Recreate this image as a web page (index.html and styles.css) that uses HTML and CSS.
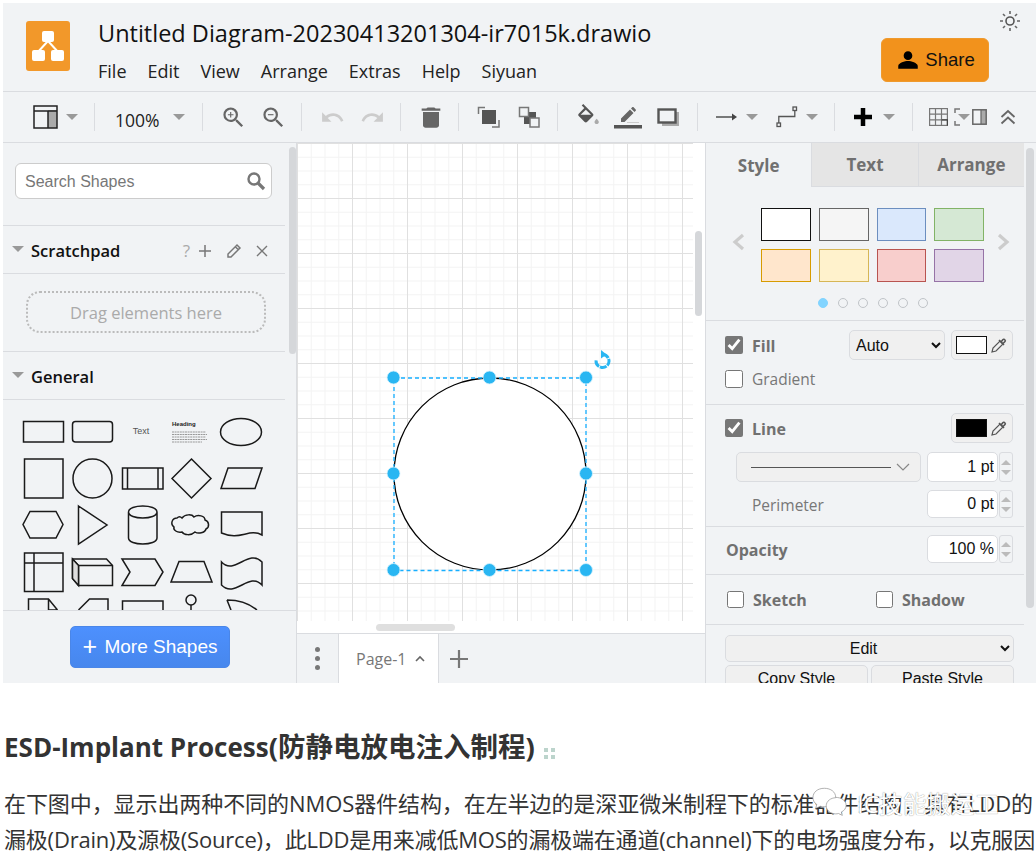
FILE: index.html
```html
<!DOCTYPE html>
<html lang="en">
<head>
  <meta charset="UTF-8" />
  <meta name="viewport" content="width=device-width, initial-scale=1.0"/>
  <title>Untitled Diagram</title>
  <link rel="stylesheet" href="styles.css">
</head>
<body>
  <div class="app">
    <header class="header">
      <svg class="logo" viewBox="0 0 44 50">
        <rect width="44" height="50" rx="3" fill="#f2982a"/>
        <path d="M22 20 L11 32 M22 20 L33 32" stroke="#fff" stroke-width="2"/>
        <rect x="16" y="10" width="12" height="11" rx="2" fill="#fff"/>
        <rect x="6" y="29" width="13" height="11" rx="2" fill="#fff"/>
        <rect x="25" y="29" width="13" height="11" rx="2" fill="#fff"/>
      </svg>
      <div class="titles">
        <div class="doc-title">Untitled Diagram-20230413201304-ir7015k.drawio</div>
        <nav class="menu">
          <span>File</span><span>Edit</span><span>View</span><span>Arrange</span><span>Extras</span><span>Help</span><span>Siyuan</span>
        </nav>
      </div>
      <button class="share">
        <svg width="26" height="26" viewBox="0 0 24 24"><path d="M12 12c2.21 0 4-1.79 4-4s-1.79-4-4-4-4 1.79-4 4 1.79 4 4 4zm0 1c-2.67 0-9 1.84-9 4.5V20h18v-2.5c0-2.66-6.33-4.5-9-4.5z"/></svg>
        Share
      </button>
      <svg class="sun" viewBox="0 0 22 22">
        <circle cx="11" cy="11" r="4" fill="none" stroke="#555" stroke-width="1.6"/>
        <path d="M11 1v3M11 18v3M1 11h3M18 11h3M4 4l2 2M16 16l2 2M4 18l2-2M16 6l2-2" stroke="#666" stroke-width="1.6"/>
      </svg>
    </header>

    <div class="toolbar">
      <div class="tb-group tb-first">
        <svg width="25" height="24" viewBox="0 0 25 24">
          <rect x="15" y="5" width="9" height="18" fill="#aaa"/>
          <rect x="1" y="1" width="23" height="22" fill="none" stroke="#222" stroke-width="1.5"/>
          <path d="M1 6h23M15 6v17" stroke="#222" stroke-width="1.5"/>
        </svg>
        <i class="caret"></i>
      </div>
      <div class="tb-group tb-zoom">
        <span class="zoom-value">100%</span>
        <i class="caret"></i>
      </div>
      <div class="tb-group">
        <span class="tb-btn"><svg width="27" height="27" viewBox="0 0 24 24" fill="#666"><path d="M15.5 14h-.79l-.28-.27A6.471 6.471 0 0 0 16 9.5 6.5 6.5 0 1 0 9.5 16c1.61 0 3.09-.59 4.23-1.57l.27.28v.79l5 4.99L20.49 19l-4.99-5zm-6 0C7.01 14 5 11.99 5 9.5S7.01 5 9.5 5 14 7.01 14 9.5 11.99 14 9.5 14z"/><path d="M12 10h-2v2H9v-2H7V9h2V7h1v2h2v1z"/></svg></span>
        <span class="tb-btn"><svg width="27" height="27" viewBox="0 0 24 24" fill="#666"><path d="M15.5 14h-.79l-.28-.27A6.471 6.471 0 0 0 16 9.5 6.5 6.5 0 1 0 9.5 16c1.61 0 3.09-.59 4.23-1.57l.27.28v.79l5 4.99L20.49 19l-4.99-5zm-6 0C7.01 14 5 11.99 5 9.5S7.01 5 9.5 5 14 7.01 14 9.5 11.99 14 9.5 14z"/><path d="M7 9h5v1H7z"/></svg></span>
      </div>
      <div class="tb-group">
        <span class="tb-btn"><svg width="25" height="25" viewBox="0 0 24 24" fill="#ccc"><path d="M12.5 8c-2.65 0-5.05.99-6.9 2.6L2 7v9h9l-3.62-3.62c1.39-1.16 3.16-1.88 5.12-1.88 3.54 0 6.55 2.31 7.6 5.5l2.37-.78C21.08 11.03 17.15 8 12.5 8z"/></svg></span>
        <span class="tb-btn"><svg width="25" height="25" viewBox="0 0 24 24" fill="#ccc"><path d="M18.4 10.6C16.55 8.99 14.15 8 11.5 8c-4.65 0-8.58 3.03-9.96 7.22L3.9 16c1.05-3.19 4.05-5.5 7.6-5.5 1.95 0 3.73.72 5.12 1.88L13 16h9V7l-3.6 3.6z"/></svg></span>
      </div>
      <div class="tb-group tb-del">
        <span class="tb-btn"><svg width="32" height="27" viewBox="0 0 24 24" preserveAspectRatio="none" fill="#666"><path d="M6 19c0 1.1.9 2 2 2h8c1.1 0 2-.9 2-2V7H6v12zM19 4h-3.5l-1-1h-5l-1 1H5v2h14V4z"/></svg></span>
      </div>
      <div class="tb-group">
        <span class="tb-btn"><svg width="24" height="24" viewBox="0 0 24 24">
          <path d="M1.5 9V2.500H8M15 22H22V15" fill="none" stroke="#777" stroke-width="1.5"/>
          <rect x="5" y="5" width="14" height="14" fill="#555"/>
        </svg></span>
        <span class="tb-btn"><svg width="24" height="24" viewBox="0 0 24 24">
          <rect x="7" y="7" width="12" height="12" fill="#555"/>
          <rect x="2.5" y="2.5" width="9" height="9" fill="#f1f3f5" stroke="#777" stroke-width="1.5"/>
          <rect x="13" y="13" width="9" height="9" fill="#f1f3f5" stroke="#777" stroke-width="1.5"/>
        </svg></span>
      </div>
      <div class="tb-group tb-format">
        <span class="tb-btn"><svg width="26" height="26" viewBox="0 0 24 24"><path fill="#555" d="M16.56 8.94L7.62 0 6.21 1.41l2.38 2.38-5.15 5.15c-.59.59-.59 1.54 0 2.12l5.5 5.5c.29.29.68.44 1.06.44s.77-.15 1.06-.44l5.5-5.5c.59-.58.59-1.53 0-2.12zM5.21 10L10 5.21 14.79 10H5.21z"/><path fill="#aaa" d="M20 13.5s-2 1.8-2 3c0 1.1.9 2 2 2s2-.9 2-2c0-1.2-2-3-2-3z"/></svg></span>
        <span class="tb-btn"><svg width="28" height="26" viewBox="0 0 28 26">
          <path fill="#666" d="M7 14.5V18h3.5L19.5 9l-3.5-3.5zM21.7 6.8c.4-.4.4-1 0-1.4l-2.1-2.1c-.4-.4-1-.4-1.4 0L17 4.5 20.5 8z"/>
          <path d="M13 18.5h12" stroke="#ccc"/>
          <rect x="0" y="21" width="28" height="3.5" fill="#555"/>
        </svg></span>
        <span class="tb-btn"><svg width="24" height="24" viewBox="0 0 24 24">
          <rect x="6" y="7" width="17" height="14" fill="#aaa"/>
          <rect x="2.5" y="4.5" width="17" height="13" fill="#f1f3f5" stroke="#555" stroke-width="2.4"/>
        </svg></span>
      </div>
      <div class="tb-group tb-lines">
        <span class="tb-combo"><svg width="22" height="12" viewBox="0 0 22 12"><path d="M0 6h19" stroke="#444" stroke-width="1.4"/><path d="M16 2.5L21 6l-5 3.5z" fill="#444"/></svg><i class="caret"></i></span>
        <span class="tb-combo"><svg width="22" height="22" viewBox="0 0 22 22" fill="none" stroke="#555" stroke-width="1.3"><rect x="1" y="17" width="3.5" height="3.5"/><rect x="17" y="1" width="3.5" height="3.5"/><path d="M2.8 17v-6.5h16V4.5"/></svg><i class="caret"></i></span>
      </div>
      <div class="tb-group tb-insert">
        <svg width="20" height="20" viewBox="0 0 20 20"><path d="M10 1v18M1 10h18" stroke="#000" stroke-width="4.5"/></svg>
        <i class="caret"></i>
      </div>
      <div class="tb-group tb-last">
        <svg width="19" height="18" viewBox="0 0 19 18" fill="none" stroke="#777" stroke-width="1.2"><rect x=".6" y=".6" width="17.8" height="16.8"/><path d="M.6 6.2h17.8M.6 11.8h17.8M6.5.6v16.8M12.5.6v16.8"/><path d="M12.5 11.8h5.9v5.6" stroke="#444"/></svg>
        <svg class="bracket-icon" width="6" height="18" viewBox="0 0 6 18" fill="none" stroke="#777" stroke-width="1.5"><path d="M6 1H1v4M6 17H1v-4"/></svg>
        <i class="caret caret-over"></i>
        <svg class="panel-icon" width="15" height="16" viewBox="0 0 15 16"><rect x="9" y="1" width="5" height="14" fill="#aaa"/><rect x=".8" y=".8" width="13.4" height="14.4" fill="none" stroke="#666" stroke-width="1.5"/><path d="M9 1v14" stroke="#666" stroke-width="1.2"/></svg>
        <svg class="collapse-icon" width="16" height="16" viewBox="0 0 16 16" fill="none" stroke="#666" stroke-width="1.8"><path d="M1.5 8L8 2l6.5 6M1.5 14.5L8 8.5l6.5 6"/></svg>
      </div>
    </div>

    <main class="workspace">
      <aside class="sidebar">
        <div class="sidebar-scroll"><i></i></div>
        <div class="search-wrap">
          <div class="search">
            <span class="search-text">Search Shapes</span>
            <svg width="20" height="20" viewBox="0 0 20 20" fill="none" stroke="#777"><circle cx="8" cy="8" r="5.5" stroke-width="2.4"/><path d="M12 12l6 6" stroke-width="3.2"/></svg>
          </div>
        </div>
        <div class="section-title">
          <i class="caret"></i>
          <b>Scratchpad</b>
          <span class="title-actions">
            <span class="qmark">?</span>
            <svg width="14" height="14" viewBox="0 0 14 14"><path d="M7 1v12M1 7h12" stroke="#777" stroke-width="1.5"/></svg>
            <svg width="16" height="16" viewBox="0 0 24 24" fill="none" stroke="#777" stroke-width="2.2"><path d="M3 21v-4.5L16.5 3 21 7.5 7.5 21z M14 5.5l4.5 4.5"/></svg>
            <svg width="12" height="12" viewBox="0 0 12 12"><path d="M1 1l10 10M11 1L1 11" stroke="#777" stroke-width="1.4"/></svg>
          </span>
        </div>
        <div class="scratch">
          <div class="drop">Drag elements here</div>
        </div>
        <div class="section-title">
          <i class="caret"></i>
          <b>General</b>
        </div>
        <div class="shapes">
          <svg width="282" height="210" viewBox="3 400 282 210" fill="none" stroke="#1a1a1a" stroke-width="1.5">
            <rect x="23.5" y="421.5" width="40" height="20.5"/>
            <rect x="72.5" y="421.5" width="40" height="20.5" rx="3"/>
            <text class="shape-text" x="141" y="434" text-anchor="middle" stroke="none" fill="#555">Text</text>
            <text class="shape-heading" x="172" y="426" stroke="none" fill="#222">Heading</text>
            <path d="M172 432h34M172 434.5h35M172 437h34M172 439.5h35M172 442h30" stroke="#999" stroke-width="1" stroke-dasharray="2 .6"/>
            <ellipse cx="241" cy="432" rx="20.5" ry="13.5"/>

            <rect x="24.5" y="459" width="38.5" height="39"/>
            <circle cx="92.5" cy="478.5" r="19.5"/>
            <rect x="122.5" y="468" width="40.5" height="21"/>
            <path d="M127.5 468v21M158 468v21"/>
            <path d="M191.5 459L211 478.5 191.5 498 172 478.5z"/>
            <path d="M228 468h34l-7 20.5h-34z"/>

            <path d="M30 511.5h26l7 13-7 13.5H30l-7-13.5z"/>
            <path d="M78.5 506L107 525 78.5 544z"/>
            <path d="M128.5 512v26c0 8 28.5 8 28.5 0v-26M128.5 512c0-8 28.5-8 28.5 0s-28.5 8-28.5 0z"/>
            <path d="M182 518c3-4 10-4 12-1 4-3 11-1 11 3 4 1 5 7 1 9-1 4-8 5-11 3-4 4-11 3-13 0-5 1-9-2-8-5-4-3-2-9 3-9 1-1 3-2 5 0z"/>
            <path d="M221.5 512h40.5v23c-13-7-22 6-40.5-2z"/>

            <rect x="24.5" y="553" width="38.5" height="38.5"/>
            <path d="M24.5 563H63M34 553v38.5"/>
            <path d="M72.5 559h34l6 6.5v20h-34l-6-7z"/>
            <path d="M72.5 559l6 6.5h34M78.5 565.5v20"/>
            <path d="M72.5 559l6 6.5v20l-6-7z" fill="#ddd"/>
            <path d="M122 559h33l8 13-8 13.5h-33l8-13.5z"/>
            <path d="M179 561.5h25l8 20.5h-41z"/>
            <path d="M221.5 562c13 14 27-14 40.5 0v23c-13-14-27 14-40.5 0z"/>

            <path d="M28.5 610v-11h20l9 11M48.5 599v11h9"/>
            <path d="M78.5 610l11-11h18.5v11"/>
            <path d="M122.5 610v-9h40.5v9"/>
            <circle cx="191" cy="600" r="5"/>
            <path d="M191 605v5"/>
            <path d="M227 600c14 0 24 5 30 10M231 610l-4-10"/>
          </svg>
        </div>
        <div class="sidebar-foot">
          <button class="more"><span class="more-plus">+</span> More Shapes</button>
        </div>
      </aside>

      <div class="center">
        <div class="canvas">
          <div class="grid"></div>
          <svg class="selection" width="408" height="490" viewBox="297 143 408 490">
            <circle cx="490" cy="474" r="96" fill="#fff" stroke="#000" stroke-width="1.3"/>
            <rect x="394" y="378" width="192" height="192.5" fill="none" stroke="#16aeff" stroke-width="1.3" stroke-dasharray="4 3"/>
            <g fill="#29b6f2" stroke="#d7f1fd" stroke-width=".8">
              <circle cx="393.5" cy="377.5" r="6.5"/><circle cx="489.5" cy="377.5" r="6.5"/><circle cx="586" cy="377.5" r="6.5"/>
              <circle cx="393.5" cy="473.5" r="6.5"/><circle cx="586" cy="473.5" r="6.5"/>
              <circle cx="393.5" cy="570" r="6.5"/><circle cx="489.5" cy="570" r="6.5"/><circle cx="586" cy="570" r="6.5"/>
            </g>
            <path d="M602.5 354.5a6.5 6.5 0 1 1-6.300 5" fill="none" stroke="#29b6f2" stroke-width="3" stroke-dasharray="7 1"/>
            <path d="M601 350l5.5 4.500-5.500 4z" fill="#29b6f2"/>
          </svg>
          <i class="scroll-h"></i>
          <i class="scroll-v"></i>
        </div>
        <div class="pagebar">
          <span class="kebab"><i></i><i></i><i></i></span>
          <span class="page-tab">Page-1
            <svg width="10" height="7" viewBox="0 0 10 7" fill="none" stroke="#666" stroke-width="1.6"><path d="M1 6l4-4 4 4"/></svg>
          </span>
          <svg class="page-add" width="20" height="20" viewBox="0 0 20 20"><path d="M10 1v18M1 10h18" stroke="#777" stroke-width="2.2"/></svg>
        </div>
      </div>

      <aside class="format">
        <div class="format-inner">
          <div class="tabs">
            <span class="tab tab-on">Style</span>
            <span class="tab">Text</span>
            <span class="tab">Arrange</span>
          </div>
          <div class="fsec sec-swatches">
            <div class="swatch-row">
              <svg class="sw-arrow" width="16" height="20" viewBox="0 0 16 20" fill="none" stroke="#ccc" stroke-width="3.2"><path d="M12 3L4 10l8 7"/></svg>
              <div class="swatches">
                <i class="sw sw-white"></i><i class="sw sw-gray"></i><i class="sw sw-blue"></i><i class="sw sw-green"></i>
                <i class="sw sw-orange"></i><i class="sw sw-yellow"></i><i class="sw sw-red"></i><i class="sw sw-purple"></i>
              </div>
              <svg class="sw-arrow sw-next" width="16" height="20" viewBox="0 0 16 20" fill="none" stroke="#ccc" stroke-width="3.2"><path d="M4 3l8 7-8 7"/></svg>
            </div>
            <div class="dots"><i class="dot dot-on"></i><i class="dot"></i><i class="dot"></i><i class="dot"></i><i class="dot"></i><i class="dot"></i></div>
          </div>
          <div class="fsec sec-fill">
            <div class="row">
              <label class="check"><input type="checkbox" checked><b>Fill</b></label>
              <select class="sel-auto"><option>Auto</option></select>
              <span class="color-btn"><i class="color-white"></i><svg width="17" height="17" viewBox="0 0 17 17" fill="none" stroke="#555" stroke-width="1.2"><path d="M2 15l1-4 7-7 3 3-7 7z"/><path d="M9 3l5 5M11 5l2-2.5c1-1 3 1 2 2L13 6.5" stroke-width="1.6"/></svg></span>
            </div>
            <label class="check check-plain row-gradient"><input type="checkbox"><span>Gradient</span></label>
          </div>
          <div class="fsec sec-line">
            <div class="row">
              <label class="check"><input type="checkbox" checked><b>Line</b></label>
              <span class="color-btn color-btn-end"><i class="color-black"></i><svg width="17" height="17" viewBox="0 0 17 17" fill="none" stroke="#555" stroke-width="1.2"><path d="M2 15l1-4 7-7 3 3-7 7z"/><path d="M9 3l5 5M11 5l2-2.5c1-1 3 1 2 2L13 6.5" stroke-width="1.6"/></svg></span>
            </div>
            <div class="row row-style">
              <span class="line-sel"><i></i><svg width="14" height="8" viewBox="0 0 14 8" fill="none" stroke="#888" stroke-width="1.2"><path d="M1 1l6 6 6-6"/></svg></span>
              <span class="num"><input value="1 pt"><span class="spin"><i class="up"></i><i class="down"></i></span></span>
            </div>
            <div class="row row-perim">
              <span class="plain-label">Perimeter</span>
              <span class="num num-short"><input value="0 pt"><span class="spin"><i class="up"></i><i class="down"></i></span></span>
            </div>
          </div>
          <div class="fsec sec-opacity">
            <div class="row">
              <b class="bold-label">Opacity</b>
              <span class="num num-short"><input value="100 %"><span class="spin"><i class="up"></i><i class="down"></i></span></span>
            </div>
          </div>
          <div class="fsec sec-opts">
            <label class="check opt-sketch"><input type="checkbox"><b>Sketch</b></label>
            <label class="check"><input type="checkbox"><b>Shadow</b></label>
          </div>
          <div class="sec-edit">
            <select class="sel-edit"><option>Edit</option></select>
            <div class="edit-btns">
              <button>Copy Style</button>
              <button>Paste Style</button>
            </div>
          </div>
        </div>
        <div class="format-scroll"><i></i></div>
      </aside>
    </main>
  </div>

  <article class="article">
    <h2><span class="h2-latin">ESD-Implant Process</span>(防静电放电注入制程)<span class="anchor"><i></i><i></i><i></i><i></i></span></h2>
    <p>在下图中，显示出两种不同的NMOS器件结构，在左半边的是深亚微米制程下的标准器件结构，具有LDD的<br><span class="tight">漏极(Drain)及源极(Source)，此LDD是用来减低MOS的漏极端在通道(channel)下的电场强度分布，以克服因</span></p>
    <div class="watermark">
      <svg width="36" height="35" viewBox="0 0 38 32" fill="#fff" stroke="#999" stroke-width=".8">
        <path d="M13 1C6 1 1 5 1 11c0 3 2 6 4 7l-1 4 5-2c1 .4 3 .5 4 .5 7 0 12-4.5 12-10S20 1 13 1z"/>
        <path d="M25 11c-5 0-10 3.5-10 8.5S20 28 25 28c1 0 2-.2 3-.4l4 2-1-3.5c3-1.500 5-4 5-7 0-5-5-8.500-11-8.500z"/>
      </svg>
      <span>IC技能搬运工</span>
    </div>
  </article>
</body>
</html>
```

FILE: styles.css
```css
html, body {
  margin: 0;
  height: 853px;
  overflow: hidden;
  background: #fff;
}

body {
  font-family: "Open Sans", "Noto Sans CJK SC", sans-serif;
  color: #222;
}

.app {
  margin: 3px 0 0 3px;
  height: 680px;
  background: #f1f3f5;
  display: flex;
  flex-direction: column;
  overflow: hidden;
}

/* header */
.header {
  height: 88px;
  border-bottom: 1px solid #dadce0;
  display: flex;
  flex: none;
}

.logo {
  width: 44px;
  height: 50px;
  margin: 18px 28px 0 23px;
  flex: none;
}

.titles {
  flex: 1;
  padding-top: 14px;
}

.doc-title {
  font-size: 23.5px;
  line-height: 32px;
  color: #111;
}

.menu {
  display: flex;
  gap: 21px;
  margin-top: 8px;
  font-size: 18px;
  line-height: 28px;
  color: #222;
}

.share {
  width: 108px;
  height: 44px;
  margin-top: 35px;
  border: 1px solid #ef9a2e;
  border-radius: 6px;
  background: #f2921c;
  font: 18.5px "Liberation Sans", sans-serif;
  color: #111;
  display: flex;
  align-items: center;
  justify-content: center;
  gap: 4px;
  padding: 0;
  flex: none;
}

.sun {
  width: 22px;
  height: 22px;
  margin: 7px 15px 0 10px;
  flex: none;
}

/* toolbar */
.toolbar {
  height: 50px;
  flex: none;
  border-bottom: 1px solid #dadce0;
  display: flex;
  align-items: center;
}

.tb-group {
  height: 28px;
  padding: 0 8px 0 10px;
  border-right: 1px solid #dadce0;
  display: flex;
  align-items: center;
  flex: none;
}

.tb-first {
  width: 92px;
  padding: 0 0 0 30px;
  gap: 8px;
  box-sizing: border-box;
}

.tb-zoom {
  width: 108px;
  box-sizing: border-box;
  padding: 0 0 0 20px;
  gap: 13px;
}

.zoom-value {
  font-size: 17.5px;
  color: #222;
  padding-top: 5px;
}

.tb-btn {
  width: 40px;
  height: 28px;
  display: flex;
  align-items: center;
  justify-content: center;
}

.tb-del {
  padding-right: 7px;
}

.tb-format {
  padding-right: 9px;
}

.tb-lines {
  width: 137px;
  box-sizing: border-box;
  padding: 0 0 0 18px;
  gap: 18px;
}

.tb-combo {
  display: flex;
  align-items: center;
  gap: 8px;
}

.tb-insert {
  width: 78px;
  box-sizing: border-box;
  padding: 0 0 0 18px;
  gap: 10px;
}

.tb-last {
  border-right: 0;
  padding: 0 0 0 16px;
}

.bracket-icon {
  margin-left: 6px;
}

.caret-over {
  margin-left: -2px;
  border-top-color: #bbb;
}

.panel-icon {
  margin-left: 2px;
}

.collapse-icon {
  margin-left: 13px;
}

.caret {
  width: 0;
  height: 0;
  border-left: 6px solid transparent;
  border-right: 6px solid transparent;
  border-top: 6px solid #999;
  flex: none;
}

/* main */
.workspace {
  flex: 1;
  display: flex;
  min-height: 0;
}

.sidebar {
  width: 293px;
  flex: none;
  border-right: 1px solid #dadce0;
  display: flex;
  flex-direction: column;
  position: relative;
}

.sidebar-scroll {
  position: absolute;
  top: 4px;
  right: 0;
  width: 7px;
  height: 207px;
}

.sidebar-scroll i {
  display: block;
  height: 100%;
  background: #d5d7da;
  border-radius: 4px;
}

.search-wrap {
  width: 282px;
  box-sizing: border-box;
  padding: 20px 13px 26px 12px;
  border-bottom: 1px solid #dadce0;
}

.search {
  height: 36px;
  box-sizing: border-box;
  border: 1px solid #ccc;
  border-radius: 6px;
  background: #fff;
  display: flex;
  align-items: center;
  justify-content: space-between;
  padding: 0 5px 0 9px;
  font: 16px "Liberation Sans", sans-serif;
  color: #777;
}

.search-text {
  padding-top: 2px;
}

.section-title {
  width: 282px;
  box-sizing: border-box;
  height: 48px;
  padding: 2px 17px 0 9px;
  border-bottom: 1px solid #dadce0;
  display: flex;
  align-items: center;
  gap: 7px;
  font-size: 16.5px;
  color: #111;
}

.section-title .caret {
  margin-top: -3px;
}

.section-title b {
  font-weight: 600;
}

.title-actions {
  margin-left: auto;
  display: flex;
  align-items: center;
  gap: 14px;
}

.qmark {
  font-size: 17px;
  color: #aaa;
  margin-right: -6px;
}

.scratch {
  width: 282px;
  box-sizing: border-box;
  height: 78px;
  padding: 17px 19px 18px 23px;
  border-bottom: 1px solid #dadce0;
}

.drop {
  height: 42px;
  box-sizing: border-box;
  border: 2px dotted #bbb;
  border-radius: 14px;
  display: flex;
  align-items: center;
  justify-content: center;
  font-size: 16.5px;
  color: #aaa;
}

.shapes {
  flex: 1;
  min-height: 0;
  overflow: hidden;
}

.shapes svg {
  display: block;
}

.shape-text {
  font: 9px "Liberation Sans", sans-serif;
}

.shape-heading {
  font: bold 6px "Liberation Sans", sans-serif;
}

.sidebar-foot {
  height: 73px;
  flex: none;
  width: 293px;
  box-sizing: border-box;
  border-top: 1px solid #dadce0;
  padding: 15px 0 0 67px;
}

.more {
  width: 160px;
  height: 42px;
  border: 1px solid #4a86e8;
  border-radius: 5px;
  background: linear-gradient(#4d90fe, #4787ed);
  color: #fff;
  font: 19px "Liberation Sans", sans-serif;
  padding: 0;
}

.more-plus {
  font-size: 25px;
  line-height: 18px;
  vertical-align: -2px;
  margin-right: 2px;
}

/* canvas */
.center {
  flex: none;
  width: 408px;
  display: flex;
  flex-direction: column;
}

.canvas {
  height: 490px;
  flex: none;
  background: #fff;
  border-bottom: 1px solid #dadce0;
  position: relative;
  overflow: hidden;
}

.grid {
  width: 396px;
  height: 478px;
  background-image:
    linear-gradient(to right, #e0e0e0 1px, transparent 1px),
    linear-gradient(to bottom, #e0e0e0 1px, transparent 1px),
    linear-gradient(to right, #f3f3f3 1px, transparent 1px),
    linear-gradient(to bottom, #f3f3f3 1px, transparent 1px);
  background-size: 55px 55px, 55px 55px, 13.75px 13.75px, 13.75px 13.75px;
}

.selection {
  position: absolute;
  left: 0;
  top: 0;
}

.scroll-h {
  position: absolute;
  left: 79px;
  top: 481px;
  width: 79px;
  height: 7px;
  border-radius: 4px;
  background: #dfdfdf;
}

.scroll-v {
  position: absolute;
  left: 398px;
  top: 88px;
  width: 7px;
  height: 85px;
  border-radius: 4px;
  background: #d5d7da;
}

.pagebar {
  flex: 1;
  display: flex;
  align-items: stretch;
}

.kebab {
  width: 41px;
  border-right: 1px solid #dadce0;
  display: flex;
  flex-direction: column;
  align-items: center;
  justify-content: center;
  gap: 4px;
}

.kebab i {
  width: 5px;
  height: 5px;
  border-radius: 50%;
  background: #777;
}

.page-tab {
  width: 100px;
  box-sizing: border-box;
  background: #fff;
  border-right: 1px solid #dadce0;
  display: flex;
  align-items: center;
  padding-left: 17px;
  gap: 9px;
  font-size: 16px;
  color: #777;
}

.page-add {
  align-self: center;
  margin-left: 10px;
}

/* format panel */
.format {
  flex: 1;
  min-width: 0;
  border-left: 1px solid #dadce0;
  display: flex;
  position: relative;
}

.format-inner {
  width: 318px;
  flex: none;
}

.format-scroll {
  position: absolute;
  left: 320px;
  top: 5px;
  width: 8px;
  height: 460px;
}

.format-scroll i {
  display: block;
  height: 100%;
  border-radius: 4px;
  background: #d5d7da;
}

.tabs {
  height: 44px;
  display: flex;
}

.tab {
  flex: 1;
  display: flex;
  align-items: center;
  justify-content: center;
  font-size: 17px;
  font-weight: 700;
  color: #707070;
  background: #e5e5e5;
  border-left: 1px solid #dadce0;
  border-bottom: 1px solid #dadce0;
}

.tab-on {
  background: none;
  border-left: 0;
  border-bottom: 0;
}

.fsec {
  border-bottom: 1px solid #dadce0;
}

.sec-swatches {
  height: 134px;
  box-sizing: border-box;
  padding-top: 21px;
}

.swatch-row {
  display: flex;
  align-items: center;
  padding-left: 25px;
}

.sw-arrow {
  margin-top: -6px;
  flex: none;
}

.sw-next {
  margin-left: 11px;
}

.swatches {
  display: grid;
  grid-template-columns: 50px 50px 49px 50px;
  grid-auto-rows: 33px;
  column-gap: 8px;
  row-gap: 8px;
  margin-left: 14px;
}

.sw {
  box-sizing: border-box;
  border: 1px solid;
}

.sw-white { background: #fff; border-color: #111; }
.sw-gray { background: #f5f5f5; border-color: #666; }
.sw-blue { background: #dae8fc; border-color: #6c8ebf; }
.sw-green { background: #d5e8d4; border-color: #82b366; }
.sw-orange { background: #ffe6cc; border-color: #d79b00; }
.sw-yellow { background: #fff2cc; border-color: #d6b656; }
.sw-red { background: #f8cecc; border-color: #b85450; }
.sw-purple { background: #e1d5e7; border-color: #9673a6; }

.dots {
  margin: 16px 0 0 112px;
  display: flex;
  gap: 10px;
}

.dot {
  width: 10px;
  height: 10px;
  box-sizing: border-box;
  border: 1px solid #c0c4c8;
  border-radius: 50%;
}

.dot-on {
  background: #82d4ff;
  border-color: #82d4ff;
}

.row {
  display: flex;
  align-items: center;
}

.check {
  display: flex;
  align-items: center;
  gap: 9px;
  font-size: 16px;
  color: #707070;
}

.check input {
  width: 18px;
  height: 18px;
  margin: 0;
  accent-color: #777;
}

.check b, .bold-label {
  font-weight: 700;
  padding-top: 1px;
}

.sec-fill {
  height: 84px;
  box-sizing: border-box;
  padding: 9px 11px 0 19px;
}

.row-gradient {
  margin-top: 8px;
}

.sel-auto {
  width: 96px;
  height: 30px;
  margin-left: auto;
  border: 1px solid #dadce0;
  border-radius: 5px;
  background: #f0f0f0;
  font: 16px "Liberation Sans", sans-serif;
  color: #111;
  padding-left: 2px;
}

.color-btn {
  width: 62px;
  height: 30px;
  box-sizing: border-box;
  margin-left: 6px;
  border: 1px solid #dadce0;
  border-radius: 5px;
  background: #f0f0f0;
  display: flex;
  align-items: center;
  padding-left: 4px;
  gap: 3px;
}

.color-btn-end {
  margin-left: auto;
}

.color-white, .color-black {
  width: 31px;
  height: 18px;
  box-sizing: border-box;
  border: 1px solid #111;
  background: #fff;
}

.color-black {
  background: #000;
}

.sec-line {
  height: 122px;
  box-sizing: border-box;
  padding: 8px 11px 0 19px;
}

.row-style {
  margin: 9px 0 0 11px;
  height: 30px;
}

.line-sel {
  width: 185px;
  height: 30px;
  box-sizing: border-box;
  border: 1px solid #dadce0;
  border-radius: 5px;
  background: #f0f0f0;
  display: flex;
  align-items: center;
  padding: 0 10px 0 14px;
  justify-content: space-between;
}

.line-sel i {
  width: 140px;
  border-top: 1px solid #555;
}

.num {
  display: flex;
  align-items: stretch;
  margin-left: auto;
  height: 30px;
}

.num-short {
  height: 28px;
}

.num input {
  width: 71px;
  box-sizing: border-box;
  border: 1px solid #dadce0;
  border-radius: 5px;
  background: #fff;
  font: 16px "Liberation Sans", sans-serif;
  color: #111;
  text-align: right;
  padding: 0 3px 0 0;
}

.spin {
  width: 14px;
  margin-left: 1px;
  box-sizing: border-box;
  border: 1px solid #dadce0;
  border-radius: 3px;
  display: flex;
  flex-direction: column;
  align-items: center;
  justify-content: center;
  gap: 5px;
}

.spin i {
  width: 0;
  height: 0;
  border-left: 5px solid transparent;
  border-right: 5px solid transparent;
}

.spin .up { border-bottom: 5px solid #bbb; }
.spin .down { border-top: 5px solid #bbb; }

.row-perim {
  margin-top: 8px;
  padding-left: 27px;
  height: 28px;
}

.plain-label {
  font-size: 15.5px;
  color: #777;
  padding-top: 2px;
}

.check-plain {
  font-size: 15.5px;
  color: #777;
}

.sec-opacity {
  height: 48px;
  box-sizing: border-box;
  padding: 8px 11px 0 20px;
}

.bold-label {
  font-size: 16px;
  color: #707070;
}

.sec-opts {
  height: 50px;
  box-sizing: border-box;
  padding-left: 21px;
  display: flex;
  align-items: center;
}

.sec-opts .opt-sketch {
  width: 149px;
}

.sec-opts input {
  width: 17px;
  height: 17px;
}

.sec-edit {
  padding: 10px 10px 0 19px;
}

.sel-edit {
  width: 289px;
  height: 27px;
  border: 1px solid #dadce0;
  border-radius: 5px;
  background: #f0f0f0;
  font: 16px "Liberation Sans", sans-serif;
  color: #111;
  text-align: center;
  display: block;
}

.edit-btns {
  margin-top: 3px;
  display: flex;
  gap: 3px;
}

.edit-btns button {
  width: 143px;
  height: 27px;
  border: 1px solid #dadce0;
  border-radius: 5px;
  background: #f0f0f0;
  font: 16px "Liberation Sans", sans-serif;
  color: #111;
  padding: 0;
}

/* article under the diagram */
.article {
  position: relative;
  padding: 46px 0 0 4px;
}

.article h2 {
  margin: 0;
  font-size: 27.5px;
  line-height: 36px;
  font-weight: 700;
  color: #333;
  white-space: nowrap;
}

.h2-latin {
  font-size: 26px;
}

.anchor {
  display: inline-grid;
  grid-template-columns: 4px 4px;
  gap: 3px;
  margin-left: 9px;
  vertical-align: 5px;
}

.anchor i {
  width: 4px;
  height: 4px;
  background: #bcd4cc;
}

.article p {
  margin: 20px 0 0;
  font-size: 22px;
  letter-spacing: -0.08px;
  line-height: 36px;
  color: #333;
  white-space: nowrap;
}

.tight {
  letter-spacing: -0.2px;
}

.watermark {
  position: absolute;
  left: 812px;
  top: 102px;
  display: flex;
  align-items: center;
  gap: 9px;
  color: #fff;
  font-size: 24px;
  text-shadow: 0 0 1px #777;
  white-space: nowrap;
}
```
